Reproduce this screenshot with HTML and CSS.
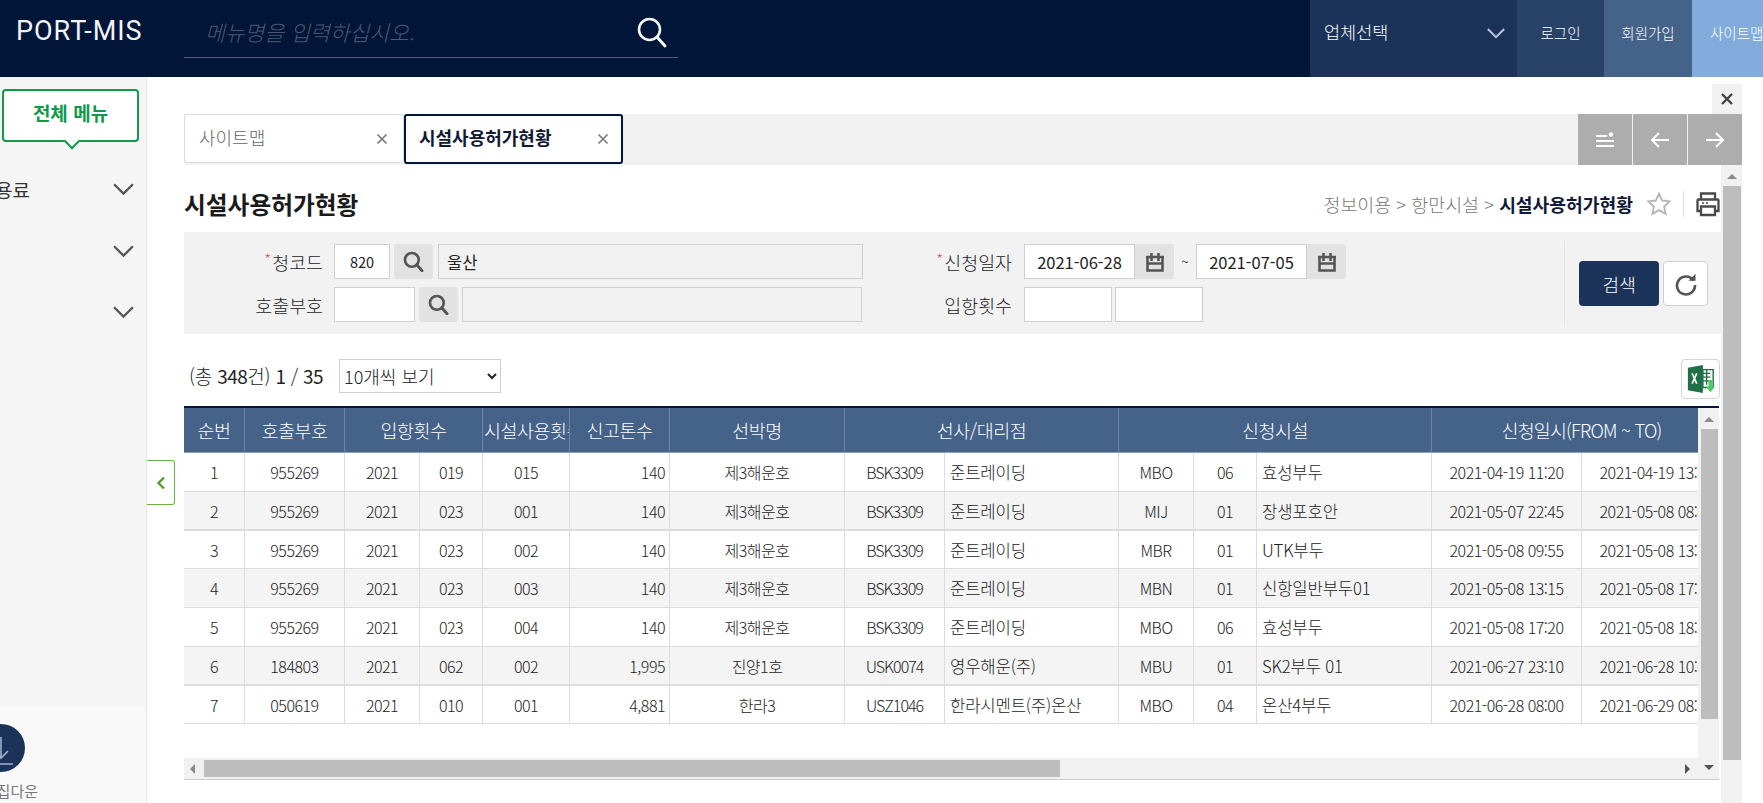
FILE: index.html
```html
<!DOCTYPE html>
<html lang="ko">
<head>
<meta charset="utf-8">
<title>PORT-MIS 시설사용허가현황</title>
<link rel="stylesheet" href="styles.css">
</head>
<body>
<svg class="defs" aria-hidden="true">
  <symbol id="i-search" viewBox="0 0 32 32"><circle cx="13.5" cy="13.5" r="10.5" fill="none" stroke="currentColor" stroke-width="2.6"/><path d="M21 21l8 9" fill="none" stroke="currentColor" stroke-width="3" stroke-linecap="round"/></symbol>
  <symbol id="i-search-b" viewBox="0 0 32 32"><circle cx="13.5" cy="13.5" r="10.5" fill="none" stroke="currentColor" stroke-width="4"/><path d="M21 21l8 9" fill="none" stroke="currentColor" stroke-width="4.500" stroke-linecap="round"/></symbol>
  <symbol id="i-chev" viewBox="0 0 22 14"><path d="M2 2l9 9 9-9" fill="none" stroke="currentColor" stroke-width="2.2"/></symbol>
  <symbol id="i-x" viewBox="0 0 12 12"><path d="M1.5 1.5l9 9M10.5 1.5l-9 9" fill="none" stroke="currentColor" stroke-width="1.6"/></symbol>
  <symbol id="i-cal" viewBox="0 0 20 20"><path d="M2.500 4.500v14h15v-14M1 5h18M2.500 11.500h15M6.500 1v8M13.500 1v8" fill="none" stroke="currentColor" stroke-width="2.600"/></symbol>
</svg>

<header class="topbar">
  <div class="logo">PORT-MIS</div>
  <div class="menu-search">
    <span class="menu-search-hint">메뉴명을 입력하십시오.</span>
    <svg class="menu-search-icon"><use href="#i-search"/></svg>
  </div>
  <div class="topbar-fill"></div>
  <div class="company">
    <span>업체선택</span>
    <svg class="company-chev"><use href="#i-chev"/></svg>
  </div>
  <a class="top-link top-login">로그인</a>
  <a class="top-link top-join">회원가입</a>
  <a class="top-link top-map">사이트맵</a>
</header>

<div class="body-row">
  <aside class="sidebar">
    <div class="side-top">
      <button class="all-menu">전체 메뉴</button>
      <div class="side-item"><span class="side-label">이용료</span><svg class="side-chev"><use href="#i-chev"/></svg></div>
      <div class="side-item"><svg class="side-chev"><use href="#i-chev"/></svg></div>
      <div class="side-item"><svg class="side-chev"><use href="#i-chev"/></svg></div>
    </div>
    <div class="side-bottom">
      <div class="dl-circle">
        <svg viewBox="0 0 48 48"><path d="M24 13v21M17 27l7 7 7-7M12 40h24" fill="none" stroke="#9fb0c8" stroke-width="1.6"/></svg>
      </div>
      <div class="dl-label">집다운</div>
    </div>
  </aside>
  <button class="side-toggle" aria-label="접기">
    <svg viewBox="0 0 10 14"><path d="M8 1.5L2.5 7 8 12.5" fill="none" stroke="#4f9e2e" stroke-width="2.4"/></svg>
  </button>

  <main class="workspace">
    <div class="close-row">
      <button class="close-all" aria-label="닫기"><svg viewBox="0 0 12 12"><path d="M1 1l10 10M11 1L1 11" fill="none" stroke="#444" stroke-width="2.4"/></svg></button>
    </div>
    <div class="tabbar">
      <div class="tab"><span>사이트맵</span><svg class="tab-x"><use href="#i-x"/></svg></div>
      <div class="tab tab-active"><span>시설사용허가현황</span><svg class="tab-x"><use href="#i-x"/></svg></div>
      <div class="tab-tools">
        <button class="tool"><svg viewBox="0 0 20 18"><path d="M1 5h11M1 10h18M1 15h18" stroke="#fff" stroke-width="2"/><circle cx="16" cy="3.5" r="2.2" fill="#fff"/></svg></button>
        <button class="tool"><svg viewBox="0 0 20 18"><path d="M19 9H2M9 2L2 9l7 7" fill="none" stroke="#fff" stroke-width="2"/></svg></button>
        <button class="tool"><svg viewBox="0 0 20 18"><path d="M1 9h17M11 2l7 7-7 7" fill="none" stroke="#fff" stroke-width="2"/></svg></button>
      </div>
    </div>

    <div class="page-row">
      <section class="page">
        <div class="title-row">
          <h1>시설사용허가현황</h1>
          <div class="crumbs">
            <span>정보이용 &gt; 항만시설 &gt; </span><strong>시설사용허가현황</strong>
            <svg class="star" viewBox="0 0 24 24"><path d="M12 2.5l2.9 6.3 6.9.8-5.1 4.7 1.4 6.8-6.1-3.4-6.1 3.4 1.4-6.8L2.2 9.600l6.900-.8z" fill="none" stroke="#b5b5b5" stroke-width="1.7"/></svg>
            <i class="crumb-div"></i>
            <svg class="printer" viewBox="0 0 26 26"><path d="M6 9V2.500h14V9M6 20H2.500V9.500a1 1 0 0 1 1-1h19a1 1 0 0 1 1 1V20H20M6 15.500h14V24H6z" fill="none" stroke="#4a4a4a" stroke-width="2.300"/><path d="M7 12h2M11 12h2" stroke="#4a4a4a" stroke-width="1.600"/></svg>
          </div>
        </div>

        <form class="filters">
          <div class="filter-fields">
            <div class="filter-col">
              <div class="f-row">
                <label class="f-label"><em>*</em>청코드</label>
                <input class="inp inp-code" value="820">
                <button type="button" class="find"><svg><use href="#i-search-b"/></svg></button>
                <input class="inp inp-name inp-ro" value="울산">
              </div>
              <div class="f-row">
                <label class="f-label">호출부호</label>
                <input class="inp inp-call">
                <button type="button" class="find"><svg><use href="#i-search-b"/></svg></button>
                <input class="inp inp-name2 inp-ro">
              </div>
            </div>
            <div class="filter-col filter-col2">
              <div class="f-row">
                <label class="f-label f-label2"><em>*</em>신청일자</label>
                <div class="date"><input class="inp inp-date" value="2021-06-28"><span class="date-btn"><svg><use href="#i-cal"/></svg></span></div>
                <span class="tilde">~</span>
                <div class="date"><input class="inp inp-date" value="2021-07-05"><span class="date-btn"><svg><use href="#i-cal"/></svg></span></div>
              </div>
              <div class="f-row">
                <label class="f-label f-label2">입항횟수</label>
                <input class="inp inp-count">
                <input class="inp inp-count">
              </div>
            </div>
          </div>
          <div class="filter-actions">
            <button type="button" class="btn-search">검색</button>
            <button type="button" class="btn-reset" aria-label="초기화"><svg viewBox="0 0 24 24"><path d="M19.500 8.500A9 9 0 1 0 21 13" fill="none" stroke="#555" stroke-width="2.600"/><path d="M14.500 8.800h7v-7z" fill="#555"/></svg></button>
          </div>
        </form>

        <div class="count-row">
          <span class="count-text">(총 <b>348</b>건) <b>1</b> / <b>35</b></span>
          <select class="page-size"><option>10개씩 보기</option></select>
          <button class="btn-excel" aria-label="엑셀">
            <svg viewBox="0 0 32 32">
              <path d="M2 4l16-3v30L2 28z" fill="#1e7145"/>
              <path d="M18 6h11v19H18z" fill="#fff" stroke="#1e7145" stroke-width="1.500"/>
              <path d="M18 10h8M18 14h8M18 18h8M22 6v16" stroke="#1e7145" stroke-width="1.500"/>
              <path d="M6.500 10l5 11M11.500 10l-5 11" stroke="#fff" stroke-width="1.800"/>
              <path d="M24 17h4v7h3l-5 6-5-6h3z" fill="#4cc764"/>
            </svg>
          </button>
        </div>

        <div class="grid">
          <div class="grid-view">
            <table>
              <colgroup>
                <col class="c61"><col class="c100"><col class="c75"><col class="c63"><col class="c87"><col class="c100"><col class="c175"><col class="c100"><col class="c174"><col class="c75"><col class="c63"><col class="c175"><col class="c150"><col class="c150">
              </colgroup>
              <thead>
                <tr><th>순번</th><th>호출부호</th><th colspan="2">입항횟수</th><th class="th-clip">시설사용횟수</th><th>신고톤수</th><th>선박명</th><th colspan="2">선사/대리점</th><th colspan="3">신청시설</th><th colspan="2" class="th-date">신청일시(FROM ~ TO)</th></tr>
              </thead>
              <tbody>
                <tr><td>1</td><td>955269</td><td>2021</td><td>019</td><td>015</td><td class="num">140</td><td>제3해운호</td><td class="code">BSK3309</td><td class="txt">준트레이딩</td><td>MBO</td><td>06</td><td class="txt">효성부두</td><td>2021-04-19 11:20</td><td>2021-04-19 13:20</td></tr>
                <tr class="alt thick"><td>2</td><td>955269</td><td>2021</td><td>023</td><td>001</td><td class="num">140</td><td>제3해운호</td><td class="code">BSK3309</td><td class="txt">준트레이딩</td><td>MIJ</td><td>01</td><td class="txt">장생포호안</td><td>2021-05-07 22:45</td><td>2021-05-08 08:45</td></tr>
                <tr class="short"><td>3</td><td>955269</td><td>2021</td><td>023</td><td>002</td><td class="num">140</td><td>제3해운호</td><td class="code">BSK3309</td><td class="txt">준트레이딩</td><td>MBR</td><td>01</td><td class="txt">UTK부두</td><td>2021-05-08 09:55</td><td>2021-05-08 13:15</td></tr>
                <tr class="alt"><td>4</td><td>955269</td><td>2021</td><td>023</td><td>003</td><td class="num">140</td><td>제3해운호</td><td class="code">BSK3309</td><td class="txt">준트레이딩</td><td>MBN</td><td>01</td><td class="txt">신항일반부두01</td><td>2021-05-08 13:15</td><td>2021-05-08 17:20</td></tr>
                <tr><td>5</td><td>955269</td><td>2021</td><td>023</td><td>004</td><td class="num">140</td><td>제3해운호</td><td class="code">BSK3309</td><td class="txt">준트레이딩</td><td>MBO</td><td>06</td><td class="txt">효성부두</td><td>2021-05-08 17:20</td><td>2021-05-08 18:50</td></tr>
                <tr class="alt thick"><td>6</td><td>184803</td><td>2021</td><td>062</td><td>002</td><td class="num">1,995</td><td>진양1호</td><td class="code">USK0074</td><td class="txt">영우해운(주)</td><td>MBU</td><td>01</td><td class="txt">SK2부두 01</td><td>2021-06-27 23:10</td><td>2021-06-28 10:00</td></tr>
                <tr class="short"><td>7</td><td>050619</td><td>2021</td><td>010</td><td>001</td><td class="num">4,881</td><td>한라3</td><td class="code">USZ1046</td><td class="txt">한라시멘트(주)온산</td><td>MBO</td><td>04</td><td class="txt">온산4부두</td><td>2021-06-28 08:00</td><td>2021-06-29 08:00</td></tr>
              </tbody>
            </table>
          </div>
          <div class="vbar">
            <span class="arrow-up"></span>
            <span class="vbar-thumb"></span>
            <span class="arrow-down"></span>
          </div>
          <div class="hbar">
            <span class="arrow-left"></span>
            <span class="hbar-thumb"></span>
            <span class="arrow-right"></span>
          </div>
        </div>
      </section>
      <div class="page-scroll">
        <span class="arrow-up page-up"></span>
        <span class="page-thumb"></span>
      </div>
    </div>
  </main>
</div>
</body>
</html>
```
FILE: styles.css
```css
* { box-sizing: border-box; }
html, body { margin: 0; height: 100%; overflow: hidden; }
body {
  width: 1763px;
  height: 803px;
  background: #fff;
  color: #222;
  font-family: "Noto Sans CJK KR", "Noto Sans", sans-serif;
  font-size: 15px;
  display: flex;
  flex-direction: column;
}
button { font-family: inherit; padding: 0; border: 0; background: none; }
input, select { font-family: inherit; }
.defs { display: none; }

/* top bar */
.topbar { height: 77px; flex: none; display: flex; align-items: stretch; background: #001537; color: #fff; }
.logo { width: 184px; padding-left: 16px; font-family: Roboto, sans-serif; font-size: 27px; font-weight: 400; letter-spacing: 1px; line-height: 63px; color: #f2f4f6; white-space: nowrap; }
.menu-search { width: 494px; height: 58px; border-bottom: 1px solid #50597a; display: flex; align-items: center; justify-content: space-between; padding: 6px 10px 0 21px; }
.menu-search-hint { font-size: 21.500px; font-style: italic; font-weight: 300; color: #4d586f; }
.menu-search-icon { width: 32px; height: 34px; color: #f4f6f8; }
.topbar-fill { flex: 1; }
.company { width: 207px; background: #1c3359; display: flex; align-items: center; justify-content: space-between; padding: 0 11px 14px 14px; font-size: 17.500px; font-weight: 300; }
.company-chev { width: 20px; height: 13px; margin-top: 4px; color: #b7c6dd; }
.top-link { display: flex; align-items: center; justify-content: center; padding-bottom: 12px; font-size: 14.500px; font-weight: 300; color: #fff; }
.top-login { width: 87px; background: #294368; }
.top-join { width: 88px; background: #456289; }
.top-map { width: 71px; background: #82acdc; justify-content: flex-start; padding-left: 18px; white-space: nowrap; overflow: hidden; }

/* body layout */
.body-row { flex: 1; display: flex; position: relative; min-height: 0; }
.sidebar { width: 147px; flex: none; border-right: 1px solid #dfe6f1; display: flex; flex-direction: column; overflow: hidden; }
.side-top { flex: 1; background: #f5f5f5; padding: 12px 11px 0 2px; }
.all-menu { display: block; position: relative; width: 137px; height: 53px; padding-bottom: 7px; background: #fff; border: 2px solid #0f9a4c; border-radius: 4px; color: #0f9a4c; font-size: 19px; font-weight: 700; margin-bottom: 16px; }
.all-menu::after { content: ""; position: absolute; left: 62px; bottom: -7px; width: 10px; height: 10px; background: #fff; border-right: 2px solid #0f9a4c; border-bottom: 2px solid #0f9a4c; transform: rotate(45deg); }
.side-item { height: 61px; display: flex; align-items: center; justify-content: flex-end; color: #333; font-size: 19px; }
.all-menu + .side-item { height: 63px; }
.side-label { white-space: nowrap; margin-right: 82px; }
.side-chev { width: 23px; height: 15px; color: #555; flex: none; }
.side-bottom { height: 97px; flex: none; background: #f9f9f9; position: relative; }
.dl-circle { position: absolute; left: -23px; top: 18px; width: 48px; height: 48px; border-radius: 50%; background: #1c3359; }
.dl-circle svg { display: block; width: 48px; height: 48px; }
.dl-label { position: absolute; right: 108px; top: 74px; font-size: 15px; color: #777; white-space: nowrap; }
.side-toggle { position: absolute; left: 147px; top: 383px; width: 28px; height: 45px; background: #fff; border: 1px solid #6db33f; border-left: 0; border-radius: 0 3px 3px 0; display: flex; align-items: center; justify-content: center; }
.side-toggle svg { width: 10px; height: 14px; }

/* workspace */
.workspace { flex: 1; min-width: 0; padding: 7px 21px 0 37px; display: flex; flex-direction: column; }
.close-row { height: 30px; flex: none; display: flex; justify-content: flex-end; }
.close-all { width: 30px; height: 30px; background: #f1f1f1; display: flex; align-items: center; justify-content: center; }
.close-all svg { width: 12px; height: 12px; }
.tabbar { height: 51px; flex: none; background: #f1f1f1; display: flex; align-items: flex-start; }
.tab { width: 220px; height: 49px; background: #fff; border: 1px solid #dcdcdc; border-radius: 3px; display: flex; align-items: center; justify-content: space-between; padding: 0 15px 4px 14px; font-size: 18px; font-weight: 300; color: #666; }
.tab-active { width: 219px; height: 50px; border: 2px solid #00163a; font-weight: 700; color: #111a33; padding: 0 12px 4px 13px; font-size: 18px; }
.tab-x { width: 12px; height: 12px; color: #777; margin-top: 4px; }
.tab-tools { margin-left: auto; height: 51px; display: flex; gap: 1px; }
.tool { width: 54px; height: 51px; background: #adadad; display: flex; align-items: center; justify-content: center; }
.tool svg { width: 20px; height: 18px; }

.page-row { flex: 1; min-height: 0; display: flex; }
.page { flex: 1; min-width: 0; display: flex; flex-direction: column; overflow: hidden; }
.title-row { height: 67px; flex: none; display: flex; align-items: center; justify-content: space-between; padding-top: 10px; }
h1 { margin: 2px 0 0; font-size: 23.700px; font-weight: 700; color: #1a1a1a; line-height: 1; }
.crumbs { display: flex; align-items: center; font-size: 18.400px; color: #777; font-weight: 300; }
.crumbs span { white-space: pre; }
.crumbs strong { color: #111a38; font-weight: 700; font-size: 18.200px; }
.star { width: 26px; height: 26px; margin-left: 13px; }
.crumb-div { width: 1px; height: 26px; background: #dcdcdc; margin: 0 11px 0 11px; }
.printer { width: 26px; height: 26px; margin-right: 0; flex: none; }

/* filters */
.filters { height: 102px; flex: none; background: #f2f2f2; display: flex; justify-content: space-between; }
.filter-fields { display: flex; }
.filter-col { width: 692px; padding-top: 12px; display: flex; flex-direction: column; gap: 8px; }
.filter-col2 { width: 520px; }
.f-row { height: 35px; display: flex; align-items: center; position: relative; }
.f-label { width: 139px; text-align: right; font-size: 18.400px; font-weight: 300; color: #222; white-space: nowrap; margin-right: 11px; }
.f-label2 { width: 136px; margin-right: 12px; }
.f-label em { color: #e85a5a; font-style: normal; font-size: 16px; vertical-align: 4px; margin-right: 1px; line-height: 0; }
.inp { height: 35px; border: 1px solid #cfcfcf; background: #fff; font-size: 14.500px; color: #222; padding: 0; outline: 0; }
.inp-code { width: 56px; text-align: center; }
.inp-call { width: 81px; }
.inp-ro { background: #f1f1f1; padding-left: 8px; font-size: 16.500px; }
.inp-name { width: 425px; margin-left: 5px; }
.inp-name2 { width: 400px; margin-left: 4px; }
.find { width: 39px; height: 35px; margin-left: 4px; background: #e2e2e2; border-radius: 3px; color: #555; display: flex; align-items: center; justify-content: center; }
.find svg { width: 21px; height: 21px; }
.date { width: 150px; height: 35px; display: flex; background: #e2e2e2; border-radius: 3px; }
.inp-date { width: 111px; text-align: center; font-size: 16.500px; }
.date-btn { flex: 1; display: flex; align-items: center; justify-content: center; color: #555; }
.date-btn svg { width: 20px; height: 20px; }
.tilde { width: 22px; text-align: center; font-size: 13px; color: #333; }
.inp-count { width: 88px; }
.inp-count + .inp-count { margin-left: 3px; }
.filter-actions { width: 157px; margin: 9px 0 8px; padding: 20px 13px 0 14px; border-left: 1px solid #e5e5e5; display: flex; gap: 4px; align-items: flex-start; }
.btn-search { width: 81px; height: 45px; background: #1c3359; color: #fff; border-radius: 4px; font-size: 18px; font-weight: 300; }
.btn-reset { width: 45px; height: 45px; background: #fff; border: 1px solid #cfcfcf; border-radius: 4px; display: flex; align-items: center; justify-content: center; }
.btn-reset svg { width: 24px; height: 24px; }

/* count row */
.count-row { height: 72px; flex: none; display: flex; align-items: flex-start; padding-top: 25px; padding-left: 5px; position: relative; }
.count-text { font-size: 19px; font-weight: 300; line-height: 34px; width: 150px; white-space: nowrap; letter-spacing: -.2px; }
.count-text b { font-weight: 400; letter-spacing: -.5px; }
.page-size { width: 162px; height: 34px; border: 1px solid #cfcfcf; background: #fff; font-size: 18px; font-weight: 300; color: #222; padding-left: 0; border-radius: 0; }
.btn-excel { position: absolute; right: 1px; top: 25px; width: 39px; height: 40px; background: #fff; border: 1px solid #d5d5d5; border-radius: 4px; display: flex; align-items: center; justify-content: center; }
.btn-excel svg { width: 30px; height: 30px; }

/* grid */
.grid { width: 1535px; flex: none; border-top: 2px solid #00163a; border-bottom: 1px solid #ccc; display: grid; grid-template-columns: 1fr 21px; grid-template-rows: 350px 21px; }
.grid-view { overflow: hidden; }
table { border-collapse: separate; border-spacing: 0; table-layout: fixed; width: 1548px; }
.c61 { width: 61px; } .c63 { width: 63px; } .c75 { width: 75px; } .c87 { width: 87px; } .c100 { width: 100px; }
.c150 { width: 150px; } .c174 { width: 174px; } .c175 { width: 175px; }
th { height: 45px; background: #456289; color: #fff; font-size: 18.400px; font-weight: 300; letter-spacing: -.4px; padding: 0; border-right: 1px solid #6e86a6; border-bottom: 1px solid #8fa2bb; white-space: nowrap; overflow: hidden; }
th.th-clip { text-align: left; padding-left: 1px; }
th.th-date { letter-spacing: -.8px; }
td { height: 39px; padding: 0; text-align: center; font-size: 16px; font-weight: 300; color: #222; border-right: 1px solid #dcdcdc; border-bottom: 1px solid #dcdcdc; white-space: nowrap; overflow: hidden; letter-spacing: -.5px; }
.short td { height: 38px; }
.thick td { border-bottom-width: 2px; }
.alt td { background: #f4f4f4; }
td.num { text-align: right; padding-right: 4px; }
td.code { letter-spacing: -1px; }
td.txt { text-align: left; padding-left: 5px; font-size: 16.700px; letter-spacing: -.2px; }

/* scrollbars */
.vbar { grid-row: 1 / span 2; grid-column: 2; background: #f1f1f1; padding: 0 1px 0 2px; display: flex; flex-direction: column; align-items: center; position: relative; }
.vbar-thumb { width: 17px; height: 290px; background: #bdbdbd; margin-top: 21px; }
.vbar .arrow-up { position: absolute; top: 9px; }
.vbar .arrow-down { position: absolute; bottom: 9px; }
.hbar { grid-row: 2; grid-column: 1; background: #f1f1f1; display: flex; align-items: center; padding: 0 8px 0 6px; }
.hbar-thumb { width: 856px; height: 17px; background: #bdbdbd; margin-left: 9px; }
.hbar .arrow-right { margin-left: auto; }
.arrow-up { width: 0; height: 0; border: 5px solid transparent; border-top: 0; border-bottom: 5px solid #8a8a8a; }
.arrow-down { width: 0; height: 0; border: 5px solid transparent; border-bottom: 0; border-top: 5px solid #555; }
.arrow-left { width: 0; height: 0; border: 5px solid transparent; border-left: 0; border-right: 5px solid #8a8a8a; }
.arrow-right { width: 0; height: 0; border: 5px solid transparent; border-right: 0; border-left: 5px solid #555; }
.page-scroll { width: 21px; flex: none; background: #f1f1f1; padding: 0 1px 0 2px; display: flex; flex-direction: column; align-items: center; position: relative; }
.page-up { position: absolute; top: 9px; }
.page-thumb { width: 18px; height: 574px; background: #bdbdbd; margin-top: 21px; }
```
